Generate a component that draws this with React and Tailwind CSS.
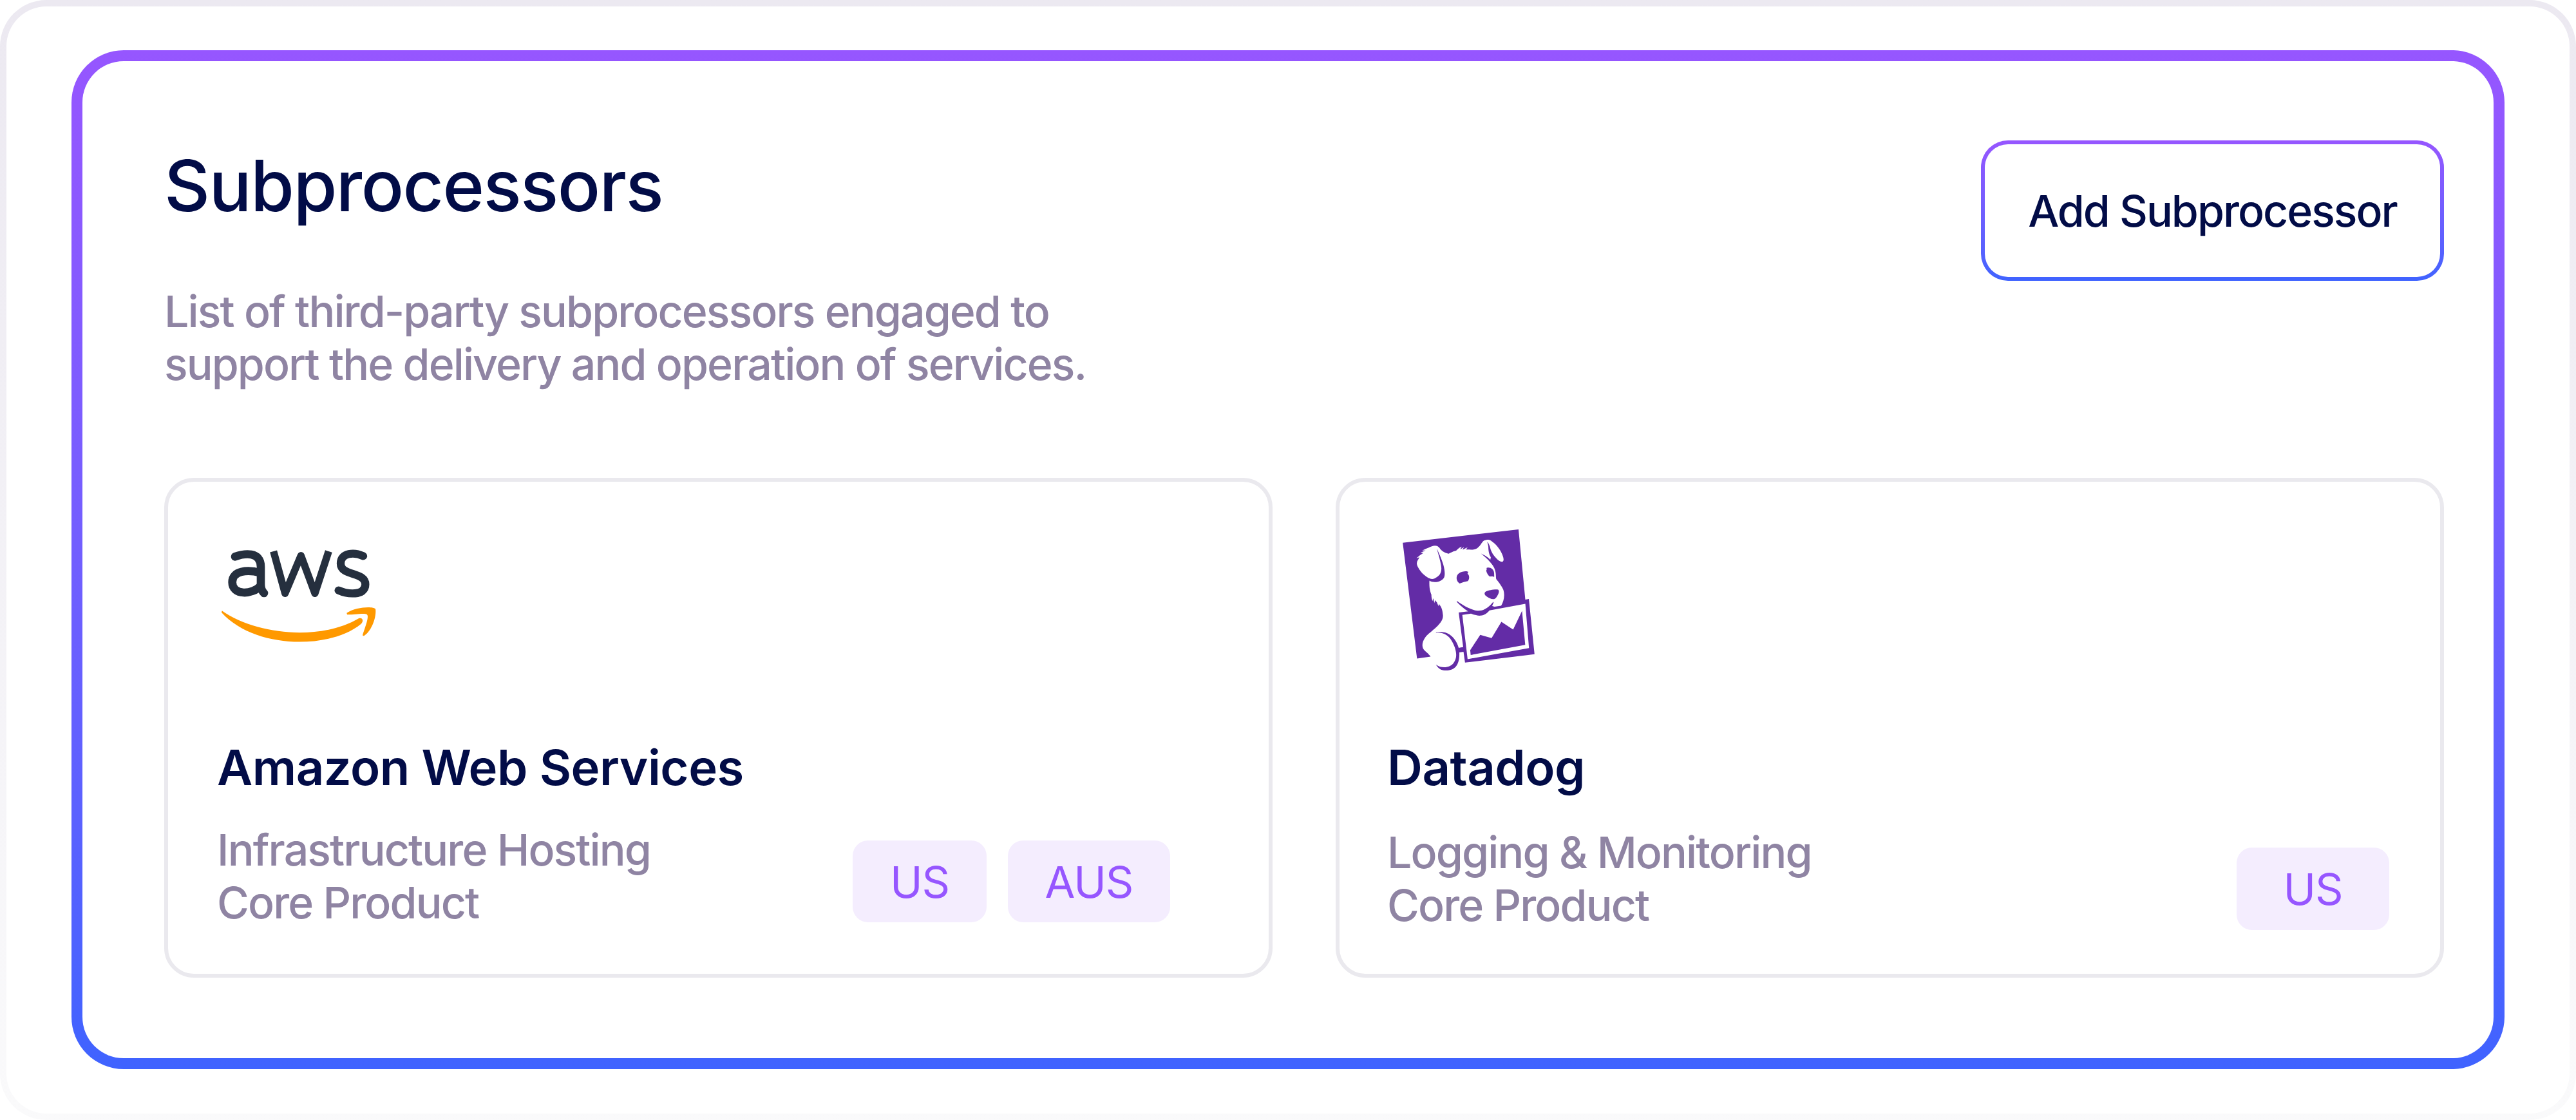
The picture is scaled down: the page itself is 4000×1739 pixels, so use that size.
import React from "react";
import { SiDatadog } from "react-icons/si";

function AwsLogo() {
  return (
    <svg viewBox="0 0 960 660" className="w-[320px] h-[220px] block">
      <g fill="none" stroke="#252f3e" strokeLinecap="round" strokeLinejoin="round">
        <path strokeWidth="38" d="M198 193 C240 178 318 166 318 240 V322 C318 345 325 355 333 363" />
        <path strokeWidth="38" d="M316 268 C255 252 185 258 185 312 C185 376 280 370 316 330" />
        <path strokeWidth="34" strokeLinecap="butt" d="M377 168 L431 364 L505 188 L570 364 L634 168" />
        <path strokeWidth="37" d="M795 190 C755 172 690 172 690 225 C690 285 805 262 805 322 C805 378 720 368 680 350" />
      </g>
      <path fill="#ff9900" d="M137 445 C300 560 600 585 775 480 C794 474 798 495 784 507 C640 625 290 625 135 453 Z" />
      <path fill="#ff9900" d="M718 455 C760 426 842 423 852 436 C858 470 836 538 800 561 C788 564 793 555 798 540 C812 500 822 468 812 462 C800 454 750 464 720 463 Z" />
    </svg>
  );
}

function Badge({ children, w, h }) {
  return (
    <span className={`flex items-center justify-center rounded-[24px] bg-[#f4edfe] text-[#9656ff] text-[68px] leading-none tracking-[-1px] ${w} ${h}`}>
      {children}
    </span>
  );
}

function Card({ logo, title, lines, badges, logoClass, pl, pr, gap, badgeTop }) {
  return (
    <div className={`flex flex-col h-[776px] rounded-[46px] border-[6px] border-[#eae9ee] bg-white ${pl} ${pr}`}>
      <div className={logoClass}>{logo}</div>
      <h3 className="text-[76px] leading-[92px] font-semibold text-[#020c47] tracking-[-0.5px]">{title}</h3>
      <div className={`flex items-start justify-between ${gap}`}>
        <p className="text-[68px] leading-[82px] text-[#8f84a3] tracking-[-1.9px] font-[450]">
          {lines[0]}
          <br />
          {lines[1]}
        </p>
        <div className={`flex gap-[33px] ${badgeTop}`}>{badges}</div>
      </div>
    </div>
  );
}

export default function App() {
  return (
    <div className="w-[4000px] h-[1739px] bg-white font-['Inter',sans-serif]">
      <div className="h-full rounded-[72px] bg-linear-to-b from-[#ece9f1] to-[#fafafb] p-[10px]">
        <div className="h-full rounded-[62px] bg-white pl-[101px] pr-[101px] pt-[68px] pb-[69px]">
          <div className="h-full rounded-[81px] bg-linear-to-b from-[#9656ff] to-[#3f63ff] p-[17px]">
            <div className="h-full rounded-[64px] bg-white pl-[127px] pr-[77px] pt-[123px]">
              <div className="flex items-start justify-between h-[524px]">
                <div>
                  <h1 className="mt-[5px] text-[110px] leading-[130px] font-medium text-[#020c47] tracking-[-1.6px]">Subprocessors</h1>
                  <p className="mt-[89px] text-[68px] leading-[82px] text-[#8f84a3] tracking-[-1.92px] font-[450]">
                    List of third-party subprocessors engaged to
                    <br />
                    support the delivery and operation of services.
                  </p>
                </div>
                <div className="w-[719px] h-[218px] rounded-[42px] bg-linear-to-b from-[#9656ff] to-[#3f63ff] p-[6px]">
                  <button className="w-full h-full rounded-[36px] bg-white text-[68px] font-medium text-[#020c47] tracking-[-2px]">Add Subprocessor</button>
                </div>
              </div>
              <div className="grid grid-cols-2 gap-[98px]">
                <Card
                  logo={<AwsLogo />}
                  logoClass="pt-[52px] -ml-[38px] h-[397px]"
                  title="Amazon Web Services"
                  lines={["Infrastructure Hosting", "Core Product"]}
                  pl="pl-[76px]"
                  pr="pr-[153px]"
                  gap="mt-[41px]"
                  badgeTop="mt-[27px]"
                  badges={[
                    <Badge key="us" w="w-[208px]" h="h-[127px]">US</Badge>,
                    <Badge key="aus" w="w-[252px]" h="h-[127px]">AUS</Badge>,
                  ]}
                />
                <Card
                  logo={<div className="pt-[74px]"><SiDatadog className="w-[219px] h-[219px] text-[#632ca6]" /></div>}
                  logoClass="ml-[17px] h-[397px]"
                  title="Datadog"
                  lines={["Logging & Monitoring", "Core Product"]}
                  pl="pl-[74px]"
                  pr="pr-[79px]"
                  gap="mt-[45px]"
                  badgeTop="mt-[34px]"
                  badges={[<Badge key="us" w="w-[237px]" h="h-[128px]">US</Badge>]}
                />
              </div>
            </div>
          </div>
        </div>
      </div>
    </div>
  );
}
